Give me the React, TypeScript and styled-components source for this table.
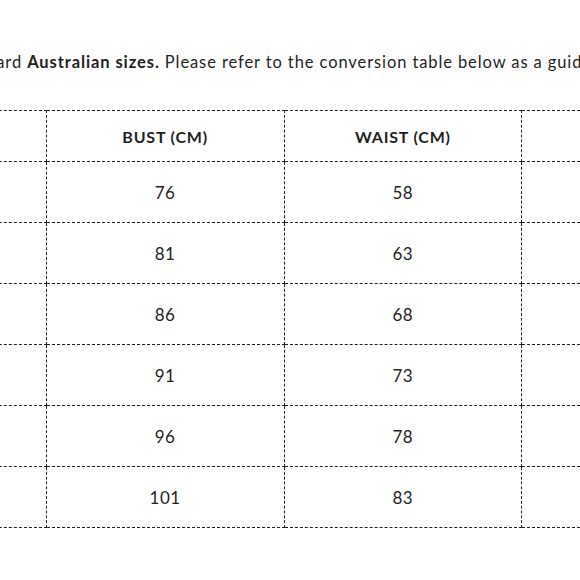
import React from 'react';
import styled, { createGlobalStyle } from 'styled-components';

const GlobalStyle = createGlobalStyle`
  body {
    margin: 0;
    background: #fff;
    overflow: hidden;
  }
`;

const Stage = styled.div`
  width: 580px;
  height: 580px;
  overflow: hidden;
  font-family: Lato, 'Open Sans', sans-serif;
  color: #1f1f1f;
`;

const Content = styled.div`
  width: 952px;
  margin-left: -192px;
  padding-top: 50px;
`;

const Intro = styled.p`
  margin: 0 0 36px;
  font-size: 16.5px;
  line-height: 24px;
  letter-spacing: 0.9px;
  white-space: nowrap;
  text-indent: 43px;

  strong {
    font-weight: 700;
  }
`;

const Table = styled.table`
  width: 952px;
  border-collapse: collapse;
  table-layout: fixed;
`;

const HeadCell = styled.th`
  height: 50px;
  padding: 0;
  border: 1px dashed #222;
  font-size: 16px;
  font-weight: 700;
  letter-spacing: 0.8px;
  text-align: center;
`;

const Cell = styled.td`
  height: 60px;
  padding: 0;
  border: 1px dashed #222;
  font-size: 17px;
  letter-spacing: 0.5px;
  text-align: center;
`;

const rows = [
  ['6', '76', '58', '84'],
  ['8', '81', '63', '89'],
  ['10', '86', '68', '94'],
  ['12', '91', '73', '99'],
  ['14', '96', '78', '104'],
  ['16', '101', '83', '109'],
];

export default function App() {
  return (
    <Stage>
      <GlobalStyle />
      <Content>
        <Intro>
          All sizes are standard <strong>Australian sizes.</strong> Please refer to the conversion table below as a guide.
        </Intro>
        <Table>
          <thead>
            <tr>
              <HeadCell>AU SIZE</HeadCell>
              <HeadCell>BUST (CM)</HeadCell>
              <HeadCell>WAIST (CM)</HeadCell>
              <HeadCell>HIPS (CM)</HeadCell>
            </tr>
          </thead>
          <tbody>
            {rows.map((r) => (
              <tr key={r[0]}>
                {r.map((v, i) => (
                  <Cell key={i}>{v}</Cell>
                ))}
              </tr>
            ))}
          </tbody>
        </Table>
      </Content>
    </Stage>
  );
}
